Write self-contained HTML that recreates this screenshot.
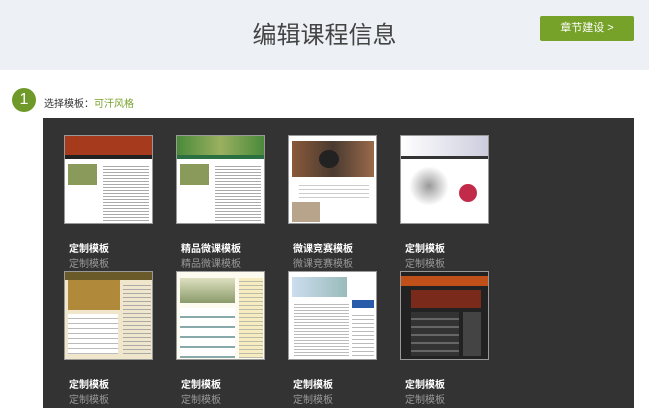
<!DOCTYPE html><html><head><meta charset="utf-8"><style>
*{margin:0;padding:0;box-sizing:border-box}
body{width:649px;height:402px;overflow:hidden;background:#fff;font-family:"Liberation Sans","Noto Sans CJK SC",sans-serif;position:relative}
.hd{position:absolute;left:0;top:0;width:649px;height:70px;background:#edf1f5}
.title{position:absolute;left:0;width:649px;top:15px;text-align:center;font-size:24px;color:#444}
.btn{position:absolute;left:540px;top:16px;width:94px;height:25px;background:#76a22a;color:#fff;font-size:11px;text-align:center;line-height:25px;border-radius:2px}
.num{position:absolute;left:12px;top:88px;width:24px;height:24px;border-radius:50%;background:#6f9a2a;color:#fff;font-size:16px;text-align:center;line-height:24px}
.lbl{position:absolute;left:44px;top:95px;font-size:10px;color:#333}
.lbl span{color:#76a22a}
.panel{position:absolute;left:43px;top:118px;width:591px;height:290px;background:#333}
.t{position:absolute;width:89px;height:89px;background:#fff;border:1px solid #999;overflow:hidden}
.n{position:absolute;font-size:10px;color:#fff;font-weight:bold}
.s{position:absolute;font-size:10px;color:#999}
.ln{position:absolute;height:1px;background:#bbb}
</style></head><body>
<div class="hd"></div>
<div class="title">编辑课程信息</div>
<div class="btn">章节建设 &gt;</div>
<div class="num">1</div>
<div class="lbl">选择模板：<span>可汗风格</span></div>
<div class="panel"></div>

<div class="t" style="left:64px;top:135px">
 <div style="height:19px;background:#a63a1c"></div><div style="height:4px;background:#222"></div>
 <div style="position:absolute;left:3px;top:28px;width:29px;height:21px;background:#8a9a5a"></div>
 <div style="position:absolute;left:38px;top:28px;width:46px;height:58px;background:repeating-linear-gradient(#fff 0 2px,#aaa 2px 3px)"></div>
</div>
<div class="t" style="left:176px;top:135px">
 <div style="height:19px;background:linear-gradient(90deg,#4a8a3a,#9ab060,#4a8a3a)"></div><div style="height:4px;background:#2a7040"></div>
 <div style="position:absolute;left:3px;top:28px;width:29px;height:21px;background:#8a9a5a"></div>
 <div style="position:absolute;left:38px;top:28px;width:46px;height:58px;background:repeating-linear-gradient(#fff 0 2px,#aaa 2px 3px)"></div>
</div>
<div class="t" style="left:288px;top:135px">
 <div style="position:absolute;left:3px;top:5px;width:82px;height:36px;background:linear-gradient(90deg,#8a5a3a,#4a3a30,#9a6a4a)"></div>
 <div style="position:absolute;left:30px;top:14px;width:20px;height:18px;border-radius:50%;background:#222"></div>
 <div style="position:absolute;left:10px;top:46px;width:70px;height:18px;background:repeating-linear-gradient(#fff 0 3px,#ccc 3px 4px)"></div>
 <div style="position:absolute;left:3px;top:66px;width:28px;height:20px;background:#b8a48a"></div>
</div>
<div class="t" style="left:400px;top:135px">
 <div style="position:absolute;left:0;top:0;width:89px;height:20px;background:linear-gradient(90deg,#fff,#ccd)"></div>
 <div style="position:absolute;left:0;top:20px;width:89px;height:3px;background:#333"></div>
 <div style="position:absolute;left:8px;top:30px;width:40px;height:40px;background:radial-gradient(#999,#fff 70%)"></div>
 <div style="position:absolute;left:58px;top:48px;width:18px;height:18px;border-radius:50%;background:#c22a4a"></div>
</div>

<div class="n" style="left:69px;top:240px">定制模板</div><div class="s" style="left:69px;top:255px">定制模板</div>
<div class="n" style="left:181px;top:240px">精品微课模板</div><div class="s" style="left:181px;top:255px">精品微课模板</div>
<div class="n" style="left:293px;top:240px">微课竞赛模板</div><div class="s" style="left:293px;top:255px">微课竞赛模板</div>
<div class="n" style="left:405px;top:240px">定制模板</div><div class="s" style="left:405px;top:255px">定制模板</div>

<div class="t" style="left:64px;top:271px;background:#efe6cc">
 <div style="position:absolute;left:0;top:0;width:89px;height:8px;background:#6a5a2a"></div>
 <div style="position:absolute;left:3px;top:8px;width:52px;height:30px;background:#b08a3a"></div>
 <div style="position:absolute;left:58px;top:10px;width:28px;height:75px;background:repeating-linear-gradient(#efe6cc 0 3px,#aaa 3px 4px)"></div>
 <div style="position:absolute;left:3px;top:42px;width:50px;height:40px;background:repeating-linear-gradient(#fff 0 4px,#bbb 4px 5px)"></div>
</div>
<div class="t" style="left:176px;top:271px;background:#fdfbf0">
 <div style="position:absolute;left:3px;top:6px;width:55px;height:25px;background:linear-gradient(#dde0c0,#8a9a6a)"></div>
 <div style="position:absolute;left:3px;top:36px;width:55px;height:50px;background:repeating-linear-gradient(#fff 0 8px,#8aa 8px 10px)"></div>
 <div style="position:absolute;left:62px;top:6px;width:24px;height:80px;background:repeating-linear-gradient(#f6ecc0 0 3px,#bba 3px 4px)"></div>
</div>
<div class="t" style="left:288px;top:271px">
 <div style="position:absolute;left:3px;top:5px;width:55px;height:20px;background:linear-gradient(90deg,#cde,#9bb)"></div>
 <div style="position:absolute;left:5px;top:30px;width:55px;height:55px;background:repeating-linear-gradient(#fff 0 2px,#bbb 2px 3px)"></div>
 <div style="position:absolute;left:63px;top:28px;width:22px;height:8px;background:#2a5aaa"></div>
 <div style="position:absolute;left:63px;top:40px;width:22px;height:45px;background:repeating-linear-gradient(#fff 0 3px,#bbb 3px 4px)"></div>
</div>
<div class="t" style="left:400px;top:271px;background:#222">
 <div style="position:absolute;left:0;top:4px;width:89px;height:10px;background:#c0501a"></div>
 <div style="position:absolute;left:10px;top:18px;width:70px;height:18px;background:#7a2a1a"></div>
 <div style="position:absolute;left:10px;top:40px;width:48px;height:44px;background:repeating-linear-gradient(#333 0 6px,#666 6px 8px)"></div>
 <div style="position:absolute;left:62px;top:40px;width:18px;height:44px;background:#444"></div>
</div>

<div class="n" style="left:69px;top:376px">定制模板</div><div class="s" style="left:69px;top:391px">定制模板</div>
<div class="n" style="left:181px;top:376px">定制模板</div><div class="s" style="left:181px;top:391px">定制模板</div>
<div class="n" style="left:293px;top:376px">定制模板</div><div class="s" style="left:293px;top:391px">定制模板</div>
<div class="n" style="left:405px;top:376px">定制模板</div><div class="s" style="left:405px;top:391px">定制模板</div>
</body></html>
